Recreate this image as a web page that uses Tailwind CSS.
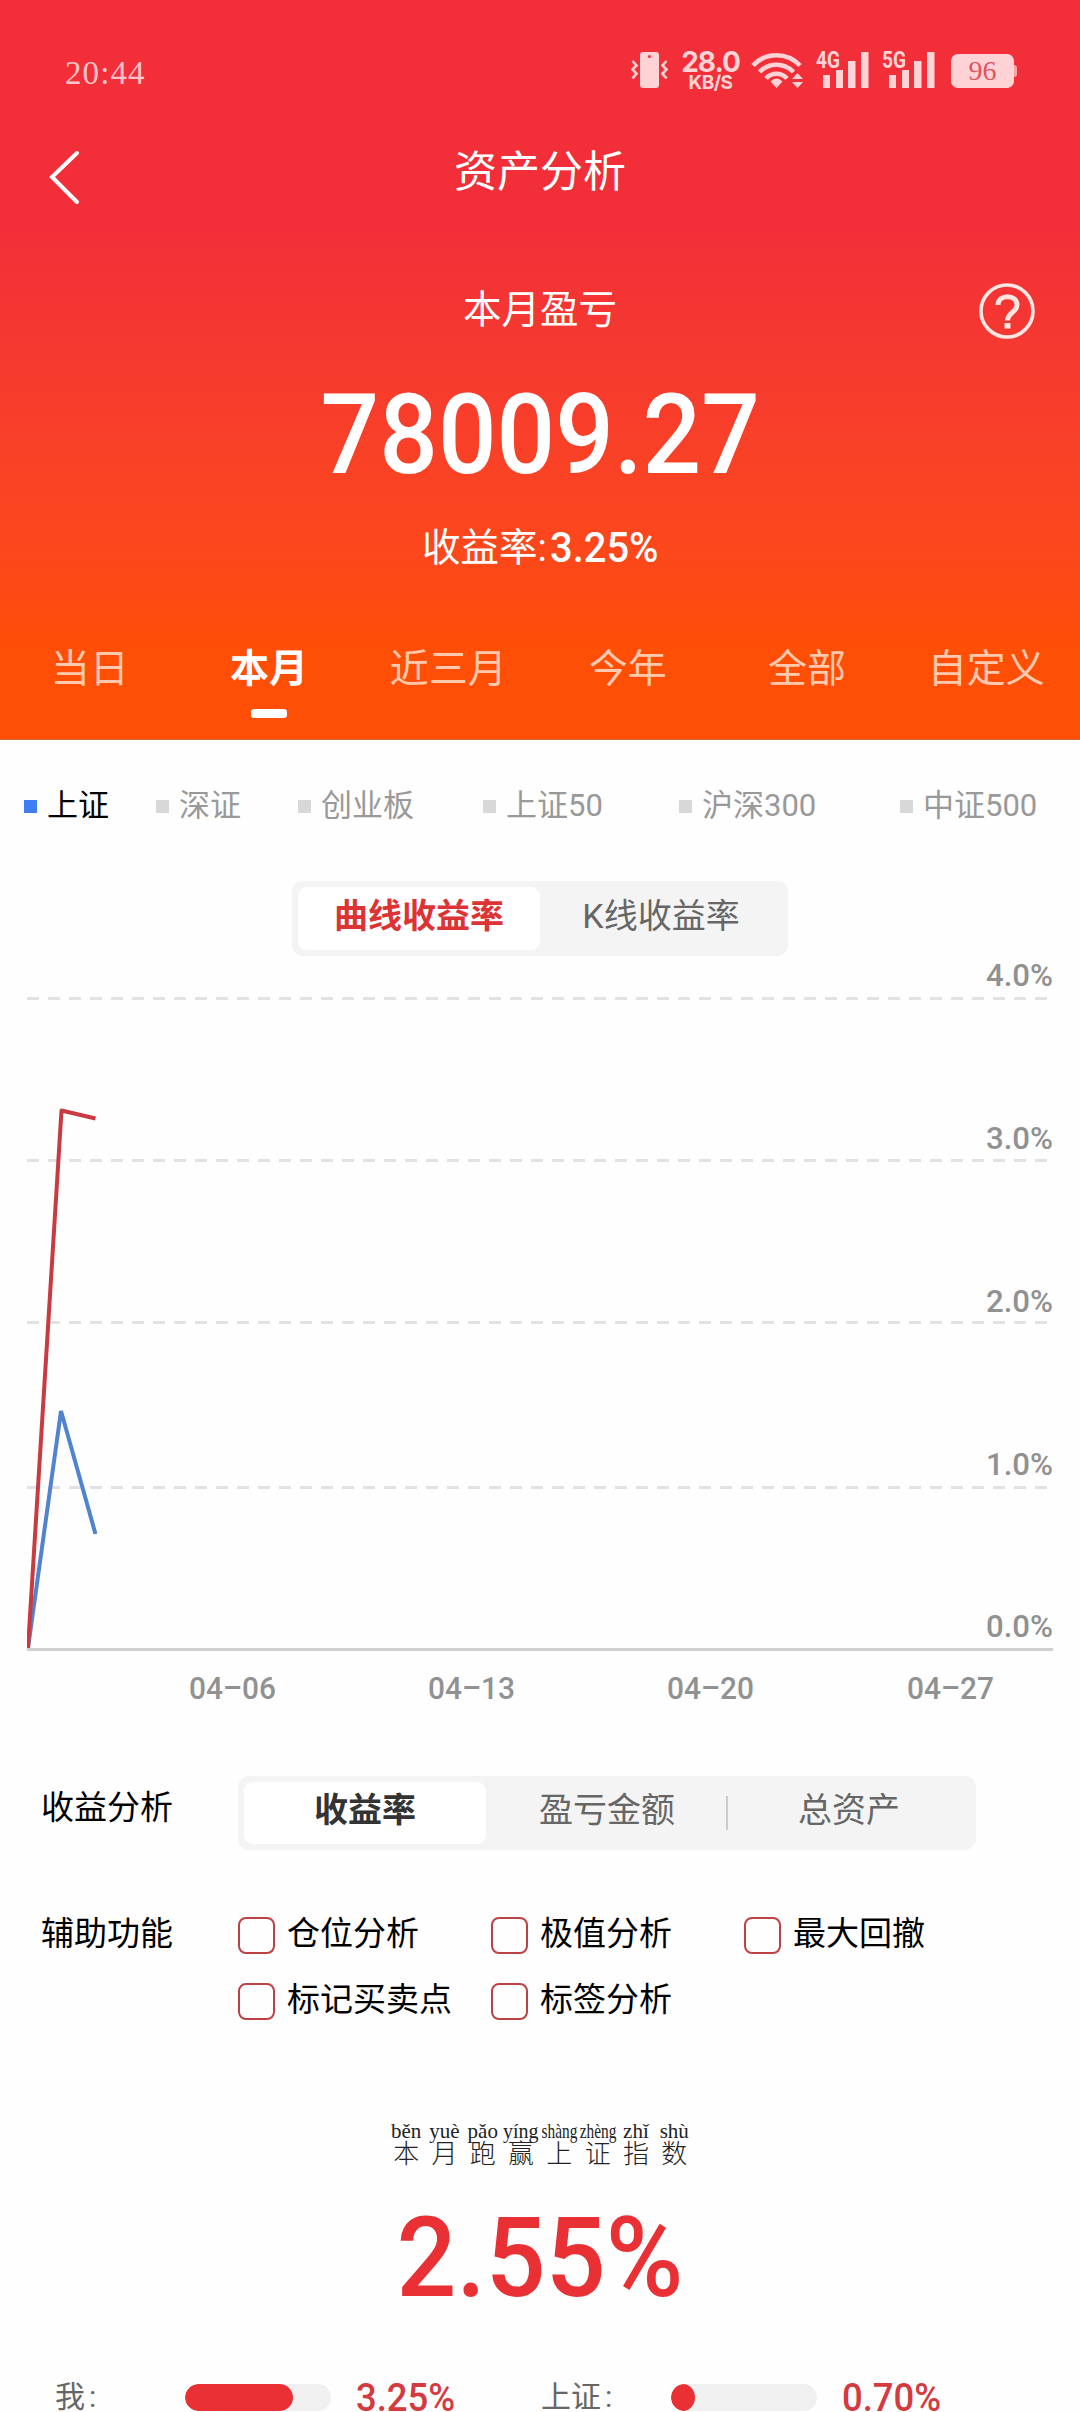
<!DOCTYPE html>
<html lang="zh-CN">
<head>
<meta charset="utf-8">
<title>资产分析</title>
<script src="https://cdn.jsdelivr.net/npm/@tailwindcss/browser@4"></script>
</head>
<body class="bg-white">
<div class="flex h-[2412px] w-[1080px] flex-col overflow-hidden bg-[#fefefe] font-[Roboto,'Noto_Sans_CJK_SC',sans-serif] text-black">

  <header class="flex h-[740px] shrink-0 flex-col bg-linear-to-b from-[#f22f38] from-[235px] to-[#ff4e05] to-[650px] text-white">
    <!-- status bar -->
    <div class="flex h-[105px] items-start justify-between pt-[50px] pr-[63px] pl-[65px] text-[#ffd3d5]">
      <span class="mt-[5px] font-['Liberation_Serif',serif] text-[33px] leading-[36px] tracking-[1.1px] text-[#ffc4c7]">20:44</span>
      <div class="flex h-[40px] items-start">
        <svg class="mr-[13px] h-[40px] w-[38px]" viewBox="0 0 38 40" fill="none" stroke="currentColor" stroke-width="2.6">
          <path d="M12 2h13a3 3 0 0 1 3 3v30a3 3 0 0 1-3 3h-13a3 3 0 0 1-3-3v-30a3 3 0 0 1 3-3z" fill="currentColor" stroke="none"/>
          <circle cx="18.500" cy="6.500" r="1.500" fill="#f22f38" stroke="none"/>
          <path d="M1.500 11l4 4.500-4 4 4 4-4 5M35.500 11l-4 4.500 4 4-4 4 4 5"/>
        </svg>
        <div class="mr-[12px] flex w-[57px] flex-col items-center font-[Inter,sans-serif]">
          <span class="text-[28px] leading-[25px] font-bold tracking-[-1px]">28.0</span>
          <span class="text-[19px] leading-[15px] font-bold tracking-[-0.5px]">KB/S</span>
        </div>
        <svg class="mr-[14px] h-[40px] w-[52px]" viewBox="0 0 52 40" fill="none" stroke="currentColor" stroke-width="4.600">
          <path d="M2 15.500a32 32 0 0 1 47 0M8.500 22a23.500 23.500 0 0 1 34 0M15 28.500a14 14 0 0 1 21 0"/>
          <path d="M25.500 38l-6-6.500q6-6 12 0zM46.500 23l5.500 6h-11zM46.500 38l5.500-6h-11z" fill="currentColor" stroke="none"/>
        </svg>
        <svg class="mr-[14px] h-[40px] w-[52px] overflow-visible" viewBox="0 0 52 40" fill="currentColor">
          <text x="-1" y="17.500" font-size="23" font-weight="700" textLength="24" lengthAdjust="spacingAndGlyphs">4G</text>
          <path d="M6 25h7v13h-7zM19 20h7v18h-7zM31 11h7.500v27h-7.500zM44 2h7.500v36h-7.500z"/>
        </svg>
        <svg class="mr-[16px] h-[40px] w-[52px] overflow-visible" viewBox="0 0 52 40" fill="currentColor">
          <text x="-1" y="17.500" font-size="23" font-weight="700" textLength="24" lengthAdjust="spacingAndGlyphs">5G</text>
          <path d="M6 25h7v13h-7zM19 20h7v18h-7zM31 11h7.500v27h-7.500zM44 2h7.500v36h-7.500z"/>
        </svg>
        <div class="mt-[4px] flex items-center">
          <div class="h-[34px] w-[63px] rounded-[7px] bg-[#ffd3d5] text-center font-['Liberation_Serif',serif] text-[28px] leading-[34px] text-[#e0545c]">96</div>
          <div class="h-[12px] w-[3px] rounded-r-sm bg-[#ffd3d5]/70"></div>
        </div>
      </div>
    </div>

    <!-- title bar -->
    <div class="grid h-[145px] grid-cols-[100px_1fr_100px]">
      <svg class="mt-[42px] ml-[46px] h-[60px] w-[36px]" viewBox="0 0 36 60" fill="none" stroke="currentColor" stroke-width="4" stroke-linecap="round"><path d="M31 6L6 30l25 25"/></svg>
      <h1 class="mt-[37px] text-center text-[43px] leading-[60px]">资产分析</h1>
    </div>

    <!-- profit summary -->
    <div class="grid h-[105px] grid-cols-[100px_1fr_100px]">
      <div></div>
      <h2 class="mt-[30px] text-center text-[38.500px] leading-[60px]">本月盈亏</h2>
      <svg class="mt-[31px] ml-[-3px] h-[60px] w-[60px]" viewBox="0 0 60 60" fill="none" stroke="#ffe6e2" stroke-width="3.600">
        <circle cx="30" cy="30" r="26"/>
        <path d="M21 24c0-11 19-11 19 0 0 7-9.500 8-9.500 15.500" stroke-width="5"/>
        <path d="M27.500 42h6v5.500h-6z" fill="#ffe6e2" stroke="none"/>
      </svg>
    </div>
    <div class="flex h-[150px] items-start justify-center">
      <div class="mt-[24px] scale-x-[0.93] text-[111px] leading-[112px] font-medium">78009.27</div>
    </div>
    <div class="flex h-[120px] items-start pl-[422px]">
      <span class="mt-[13px] text-[38.500px] leading-[60px]">收益率:</span>
      <span class="mt-[13px] ml-[3px] origin-left scale-x-[0.95] text-[42px] leading-[60px] font-medium">3.25%</span>
    </div>

    <!-- period tabs -->
    <nav class="mr-[4px] grid h-[114px] grid-cols-6 text-center text-[39px] leading-[60px] text-[#ffc9ae]">
      <span class="mt-[14px]">当日</span>
      <span class="mt-[14px] flex flex-col items-center font-bold text-white">本月<i class="mt-[10px] block h-[9px] w-[36px] rounded-[3px] bg-white"></i></span>
      <span class="mt-[14px]">近三月</span>
      <span class="mt-[14px]">今年</span>
      <span class="mt-[14px]">全部</span>
      <span class="mt-[14px]">自定义</span>
    </nav>
    <div class="h-px bg-[#cf6a3c]"></div>
  </header>

  <!-- index legend -->
  <div class="flex h-[141px] shrink-0 items-start pt-[46px] pl-[24px] text-[31px] leading-[40px] text-[#999]">
    <div class="flex w-[132px] items-center gap-[10px] text-black"><i class="size-[13px] bg-[#3f7df3]"></i>上证</div>
    <div class="flex w-[142px] items-center gap-[10px]"><i class="size-[13px] bg-[#d8d8d8]"></i>深证</div>
    <div class="flex w-[185px] items-center gap-[10px]"><i class="size-[13px] bg-[#d8d8d8]"></i>创业板</div>
    <div class="flex w-[196px] items-center gap-[10px]"><i class="size-[13px] bg-[#d8d8d8]"></i>上证50</div>
    <div class="flex w-[221px] items-center gap-[10px]"><i class="size-[13px] bg-[#d8d8d8]"></i>沪深300</div>
    <div class="flex items-center gap-[10px] whitespace-nowrap"><i class="size-[13px] bg-[#d8d8d8]"></i>中证500</div>
  </div>

  <!-- chart type -->
  <div class="ml-[292px] grid h-[75px] w-[496px] shrink-0 grid-cols-2 rounded-[11px] bg-[#f4f4f4] p-[6px] text-center text-[34px] leading-[58px] text-[#666]">
    <div class="h-[63px] rounded-[9px] bg-white font-bold text-[#dc3334]">曲线收益率</div>
    <div>K线收益率</div>
  </div>

  <!-- return chart -->
  <svg class="h-[764px] w-[1080px] shrink-0" viewBox="0 956 1080 764">
    <g stroke="#e2e2e2" stroke-width="3" stroke-dasharray="12 9">
      <path d="M27 998.500H1053M27 1160.500H1053M27 1322.500H1053M27 1487.500H1053"/>
    </g>
    <path d="M27 1649.500H1053" stroke="#d0d0d0" stroke-width="3"/>
    <svg x="27" y="956" width="100" height="692" viewBox="27 956 100 692" fill="none" stroke-width="4">
      <path d="M28 1648L61 1411L95.500 1534" stroke="#5083d0"/>
      <path d="M28 1648L61.500 1110.500L95.500 1118.500" stroke="#c93b41" stroke-linejoin="round"/>
    </svg>
    <g fill="#919191" font-size="32" font-weight="500">
      <text x="986" y="986" textLength="67" lengthAdjust="spacingAndGlyphs">4.0%</text>
      <text x="986" y="1149" textLength="67" lengthAdjust="spacingAndGlyphs">3.0%</text>
      <text x="986" y="1312" textLength="67" lengthAdjust="spacingAndGlyphs">2.0%</text>
      <text x="986" y="1475" textLength="67" lengthAdjust="spacingAndGlyphs">1.0%</text>
      <text x="986" y="1637" textLength="67" lengthAdjust="spacingAndGlyphs">0.0%</text>
      <text x="189" y="1699" textLength="87" lengthAdjust="spacingAndGlyphs">04–06</text>
      <text x="428" y="1699" textLength="87" lengthAdjust="spacingAndGlyphs">04–13</text>
      <text x="667" y="1699" textLength="87" lengthAdjust="spacingAndGlyphs">04–20</text>
      <text x="907" y="1699" textLength="87" lengthAdjust="spacingAndGlyphs">04–27</text>
    </g>
  </svg>

  <!-- analysis mode -->
  <div class="mt-[56px] flex h-[74px] shrink-0 pl-[41px]">
    <div class="w-[197px] text-[33px] leading-[63px]">收益分析</div>
    <div class="grid w-[738px] grid-cols-3 rounded-[11px] bg-[#f4f4f4] p-[6px] text-center text-[34px] leading-[57px] text-[#666]">
      <div class="h-[62px] rounded-[9px] bg-white font-bold text-[#333]">收益率</div>
      <div class="flex items-center"><span class="ml-[2px] flex-1 self-start">盈亏金额</span><i class="h-[34px] w-[2px] bg-[#ccc]"></i></div>
      <div>总资产</div>
    </div>
  </div>

  <!-- helper options -->
  <div class="mt-[60px] flex h-[150px] shrink-0 pl-[41px] text-[33px] leading-[48px]">
    <div class="w-[197px]">辅助功能</div>
    <div class="grid grid-cols-[253px_253px_253px] grid-rows-[66px_66px]">
      <label class="flex gap-[12px] whitespace-nowrap"><i class="mt-[7px] size-[37px] rounded-[8px] border-2 border-[#bd4244]"></i>仓位分析</label>
      <label class="flex gap-[12px] whitespace-nowrap"><i class="mt-[7px] size-[37px] rounded-[8px] border-2 border-[#bd4244]"></i>极值分析</label>
      <label class="flex gap-[12px] whitespace-nowrap"><i class="mt-[7px] size-[37px] rounded-[8px] border-2 border-[#bd4244]"></i>最大回撤</label>
      <label class="flex gap-[12px] whitespace-nowrap"><i class="mt-[7px] size-[37px] rounded-[8px] border-2 border-[#bd4244]"></i>标记买卖点</label>
      <label class="flex gap-[12px] whitespace-nowrap"><i class="mt-[7px] size-[37px] rounded-[8px] border-2 border-[#bd4244]"></i>标签分析</label>
    </div>
  </div>

  <!-- outperformance -->
  <div class="mt-[60px] ml-[387px] grid h-[50px] shrink-0 grid-cols-[repeat(8,38.300px)] grid-rows-[22px_28px] justify-items-center font-['Liberation_Serif','Noto_Sans_CJK_SC',serif] text-[21px] leading-[22px] whitespace-nowrap text-[#222]">
    <span>běn</span><span>yuè</span><span>pǎo</span><span class="-mx-2 scale-x-[0.95]">yíng</span><span class="-mx-2 scale-x-[0.73]">shàng</span><span class="-mx-2 scale-x-[0.73]">zhèng</span><span>zhǐ</span><span>shù</span>
    <span class="text-[26px] leading-[26px] font-light">本</span><span class="text-[26px] leading-[26px] font-light">月</span><span class="text-[26px] leading-[26px] font-light">跑</span><span class="text-[26px] leading-[26px] font-light">赢</span><span class="text-[26px] leading-[26px] font-light">上</span><span class="text-[26px] leading-[26px] font-light">证</span><span class="text-[26px] leading-[26px] font-light">指</span><span class="text-[26px] leading-[26px] font-light">数</span>
  </div>
  <div class="mt-[32px] flex h-[112px] shrink-0 justify-center">
    <div class="scale-x-[0.95] text-[111px] leading-[112px] font-medium text-[#e93035]">2.55%</div>
  </div>

  <!-- comparison bars -->
  <div class="mt-[60px] flex h-[40px] shrink-0 items-start pl-[55px] text-[30px] leading-[46px] text-[#666]">
    <span class="w-[130px]">我<span class="ml-[4px]">:</span></span>
    <div class="mt-[10px] h-[27px] w-[146px] overflow-hidden rounded-full bg-[#f0f0f0]"><div class="h-full rounded-full bg-[#e93035]" style="width:108px"></div></div>
    <span class="ml-[25px] w-[185px] origin-left scale-x-[0.96] text-[38px] leading-[48px] font-medium text-[#d43a3e]">3.25%</span>
    <span class="w-[130px]">上证<span class="ml-[4px]">:</span></span>
    <div class="mt-[10px] h-[27px] w-[146px] overflow-hidden rounded-full bg-[#f0f0f0]"><div class="h-full rounded-[50%] bg-[#e93035]" style="width:24px"></div></div>
    <span class="ml-[25px] origin-left scale-x-[0.96] text-[38px] leading-[48px] font-medium text-[#d43a3e]">0.70%</span>
  </div>
</div>
</body>
</html>
